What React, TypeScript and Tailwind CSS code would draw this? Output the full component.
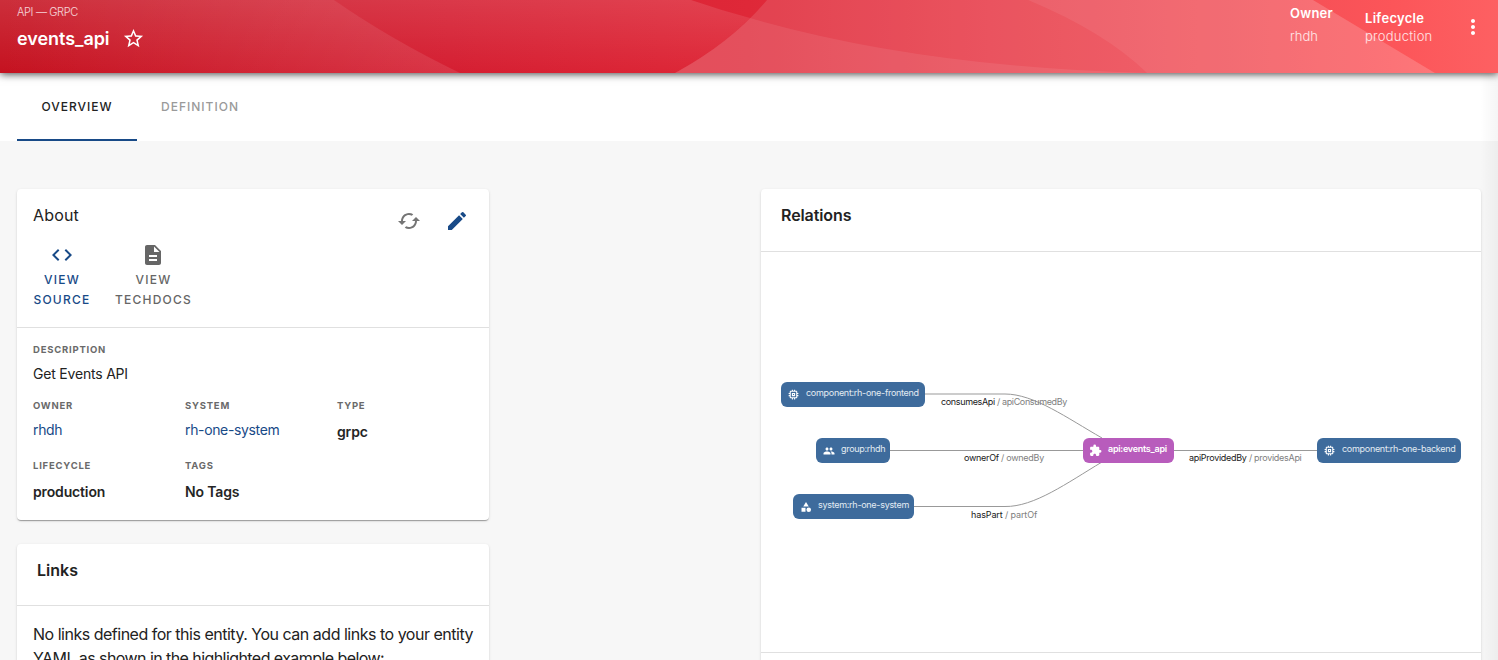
import React from "react";
import { MdCached, MdCategory, MdCode, MdDescription, MdEdit, MdExtension, MdMemory, MdMoreVert, MdPeople, MdStarBorder } from "react-icons/md";

function HeaderBackdrop() {
  return (
    <svg className="absolute inset-0 h-full w-full" viewBox="0 0 1498 73" preserveAspectRatio="none" aria-hidden="true">
      <defs>
        <linearGradient id="base" x1="0" y1="0" x2="1498" y2="0" gradientUnits="userSpaceOnUse">
          <stop offset="0" stopColor="#c51220" />
          <stop offset="0.3" stopColor="#d51e31" />
          <stop offset="0.5" stopColor="#df2838" />
          <stop offset="0.66" stopColor="#e73c49" />
          <stop offset="0.8" stopColor="#ef4a54" />
          <stop offset="0.93" stopColor="#fc5559" />
          <stop offset="1" stopColor="#fd6062" />
        </linearGradient>
        <linearGradient id="fade" x1="0" y1="0" x2="0" y2="1">
          <stop offset="0" stopColor="#fff" stopOpacity="0.12" />
          <stop offset="1" stopColor="#fff" stopOpacity="0" />
        </linearGradient>
        <linearGradient id="sweep" x1="0" y1="0" x2="460" y2="0" gradientUnits="userSpaceOnUse">
          <stop offset="0" stopColor="#fff" stopOpacity="0" />
          <stop offset="1" stopColor="#fff" stopOpacity="0.1" />
        </linearGradient>
      </defs>
      <path d="M0 0H1498V73H0Z" fill="url(#base)" />
      <path d="M0 0H334Q390 39 460 73H0Z" fill="url(#fade)" />
      <path d="M0 0H334Q390 39 460 73H0Z" fill="url(#sweep)" />
      <path d="M334 0H691Q720 10 750 18Q718 50 675 73H460Q390 39 334 0Z" fill="url(#fade)" />
      <path d="M767 0Q732 42 675 73H1435L1313 0Z" fill="#fff" fillOpacity="0.12" />
      <path d="M750 18Q920 67 1147 73H675Q718 50 750 18Z" fill="#fff" fillOpacity="0.08" />
      <path d="M1028 0Q1105 32 1147 73H1435L1313 0Z" fill="#fff" fillOpacity="0.07" />
    </svg>
  );
}

function FieldLabel({ children }: { children: React.ReactNode }) {
  return <div className="pt-[1px] text-[9.5px] leading-4 font-bold tracking-[0.78px] text-[#6a6a6a]">{children}</div>;
}

function Field({ label, children, plain }: { label: string; children: React.ReactNode; plain?: boolean }) {
  return (
    <div className="h-[60px]">
      <FieldLabel>{label}</FieldLabel>
      <div className={plain ? "pt-[6px] text-[14px] leading-5 tracking-[-0.35px] text-[#184a87]" : "pt-[8px] text-[14px] leading-5 font-semibold tracking-[-0.15px] text-[#252525]"}>{children}</div>
    </div>
  );
}

function GraphNode({ place, icon, label, active }: { place: string; icon: React.ReactNode; label: string; active?: boolean }) {
  return (
    <div className={`absolute flex h-[25px] items-center rounded-[6px] text-white ${active ? "bg-[#b85cbc]" : "bg-[#3e6b9c]"} ${place}`}>
      <span className="ml-[6px] flex w-[13px] shrink-0 justify-center">{icon}</span>
      <span className={`-mt-[3px] ml-[6px] text-[9px] leading-3 whitespace-nowrap ${active ? "font-semibold tracking-[-0.26px]" : "tracking-[-0.29px] text-[#e3ebf3]"}`}>{label}</span>
    </div>
  );
}

function EdgeLabel({ place, from, to }: { place: string; from: string; to: string }) {
  return (
    <div className={`absolute text-[9px] leading-3 whitespace-nowrap text-[#808080] ${place}`}>
      <span className="text-[#202020]">{from}</span> / {to}
    </div>
  );
}

const card = "rounded-[4px] bg-white shadow-[0_2px_1px_-1px_rgba(0,0,0,0.2),0_1px_1px_rgba(0,0,0,0.14),0_1px_3px_rgba(0,0,0,0.12)]";

export default function App() {
  return (
    <div className="relative flex h-[660px] w-[1498px] flex-col overflow-hidden bg-[#f7f7f7] font-[Inter,sans-serif] text-[#222]">
      <header className="relative z-10 h-[73px] shrink-0 shadow-[0_1px_8px_rgba(0,0,0,0.75)]">
        <HeaderBackdrop />
        <div className="relative flex h-full justify-between pr-[17px] pl-[17px] text-white">
          <div className="pt-1">
            <div className="text-[11px] leading-4 font-light tracking-[-0.35px] text-white/80">API — GRPC</div>
            <div className="flex items-center gap-3 pt-[7px]">
              <h1 className="text-[18px] leading-6 font-semibold tracking-[-0.05px]">events_api</h1>
              <MdStarBorder size={23} className="-mt-px" />
            </div>
          </div>
          <div className="flex text-[13px]">
            <div className="w-[76px] pt-[3px] pl-[1px]">
              <div className="leading-5 font-semibold tracking-[0.25px]">Owner</div>
              <div className="pt-[3px] leading-5 font-light text-white/85">rhdh</div>
            </div>
            <div className="w-[96px] pt-[8px]">
              <div className="leading-5 font-semibold tracking-[0.3px]">Lifecycle</div>
              <div className="-mt-[2px] leading-5 font-light tracking-[0.25px] text-white/85">production</div>
            </div>
            <MdMoreVert size={24} className="mt-[15px] -mr-1" />
          </div>
        </div>
      </header>

      <nav className="flex h-[68px] shrink-0 bg-white pl-[17px] text-[12px] font-medium">
        <div className="flex w-[120px] items-center justify-center border-b-2 border-[#184a87] pt-[2px] tracking-[1px]">OVERVIEW</div>
        <div className="flex w-[126px] items-center justify-center border-b-2 border-transparent pt-[2px] tracking-[1px] text-[#9a9a9a]">DEFINITION</div>
      </nav>

      <main className="flex justify-between px-[17px] pt-12">
        <div className="flex w-[472px] flex-col gap-6">
          <section className={`h-[331px] ${card}`}>
            <div className="h-[139px] border-b border-[#e0e0e0] px-4">
              <div className="flex h-[54px] items-start justify-between">
                <h2 className="pt-[14px] text-[16px] leading-6 tracking-[0.15px]">About</h2>
                <div className="flex gap-6 pt-[20px] pr-1">
                  <MdCached size={24} className="text-[#757575]" />
                  <MdEdit size={24} className="text-[#184a87]" />
                </div>
              </div>
              <div className="flex gap-6 text-center text-[12px] leading-5 font-medium tracking-[1.25px]">
                <div className="flex w-[58px] flex-col items-center text-[#184a87]">
                  <MdCode size={24} />
                  <div className="pt-[3px]">VIEW<br />SOURCE</div>
                </div>
                <div className="flex w-[77px] flex-col items-center text-[#666]">
                  <MdDescription size={24} className="-ml-px" />
                  <div className="pt-[3px]">VIEW<br />TECHDOCS</div>
                </div>
              </div>
            </div>
            <div className="px-4 pt-[13px]">
              <div className="h-14">
                <FieldLabel>DESCRIPTION</FieldLabel>
                <div className="pt-[6px] text-[14px] leading-5 tracking-[-0.2px]">Get Events API</div>
              </div>
              <div className="grid grid-cols-[152px_152px_136px]">
                <Field label="OWNER" plain>rhdh</Field>
                <Field label="SYSTEM" plain>rh-one-system</Field>
                <Field label="TYPE">grpc</Field>
                <Field label="LIFECYCLE">production</Field>
                <Field label="TAGS">No Tags</Field>
              </div>
            </div>
          </section>
          <section className={`h-[300px] ${card}`}>
            <h2 className="h-[62px] border-b border-[#e0e0e0] pt-[14px] pl-5 text-[16px] leading-6 font-semibold">Links</h2>
            <p className="px-4 pt-4 text-[16px] leading-6 tracking-[-0.49px] whitespace-nowrap">No links defined for this entity. You can add links to your entity<br /><span className="tracking-[-0.57px]">YAML as shown in the highlighted example below:</span></p>
          </section>
        </div>

        <section className={`h-[540px] w-[720px] ${card}`}>
          <h2 className="h-[63px] border-b border-[#e0e0e0] pt-[14px] pl-5 text-[16px] leading-6 font-semibold tracking-[-0.1px]">Relations</h2>
          <div className="relative h-[401px] border-b border-[#e0e0e0]">
            <svg className="absolute inset-0" width="720" height="400" fill="none" stroke="#999" strokeWidth="1" aria-hidden="true">
              <path d="M164 142H244C273 142 306 166 341 186M129 198.500H322M152 254.500H244C273 255 306 231 341 210M412 198.500H556" />
            </svg>
            <GraphNode place="left-5 top-[130px] w-[144px]" icon={<MdMemory size={13} />} label="component:rh-one-frontend" />
            <GraphNode place="left-[55px] top-[186px] w-[74px]" icon={<MdPeople size={12} />} label="group:rhdh" />
            <GraphNode place="left-8 top-[242px] w-[121px]" icon={<MdCategory size={12} />} label="system:rh-one-system" />
            <GraphNode place="left-[322px] top-[186px] w-[91px]" icon={<MdExtension size={13} />} label="api:events_api" active />
            <GraphNode place="left-[556px] top-[186px] w-[144px]" icon={<MdMemory size={13} />} label="component:rh-one-backend" />
            <EdgeLabel place="left-[180px] top-[144px] tracking-[-0.36px]" from="consumesApi" to="apiConsumedBy" />
            <EdgeLabel place="left-[203px] top-[200px] tracking-[-0.28px]" from="ownerOf" to="ownedBy" />
            <EdgeLabel place="left-[210px] top-[257px] tracking-[-0.12px]" from="hasPart" to="partOf" />
            <EdgeLabel place="left-[428px] top-[200px] tracking-[-0.29px]" from="apiProvidedBy" to="providesApi" />
          </div>
        </section>
      </main>
      <div className="pointer-events-none absolute top-[73px] right-0 bottom-0 w-[18px] bg-linear-to-r from-transparent to-black/4" />
    </div>
  );
}
